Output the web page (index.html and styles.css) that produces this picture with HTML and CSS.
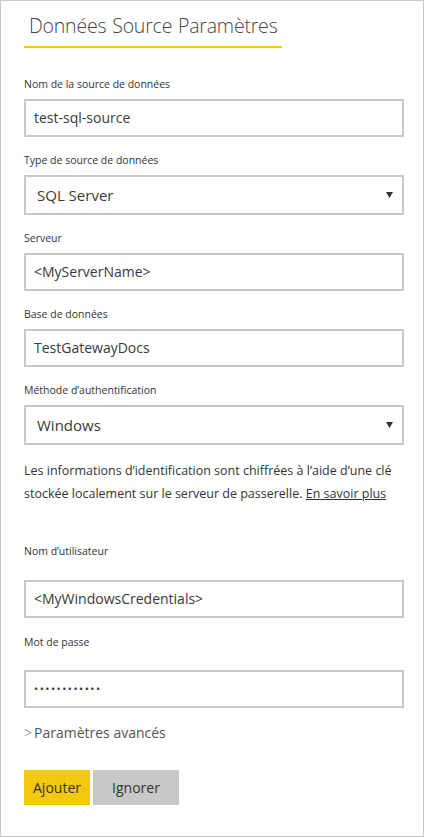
FILE: index.html
```html
<!DOCTYPE html>
<html lang="fr">
<head>
<meta charset="utf-8">
<title>Données Source Paramètres</title>
<link rel="stylesheet" href="styles.css">
</head>
<body>
<div class="frame">
  <h1 class="title">Données Source Paramètres</h1>

  <div class="field first">
    <div class="label">Nom de la source de données</div>
    <div class="input">test-sql-source</div>
  </div>

  <div class="field">
    <div class="label">Type de source de données</div>
    <div class="select"><span class="select-text">SQL Server</span><svg class="caret" width="7" height="6" viewBox="0 0 7 6"><path d="M0 0H7L3.5 6Z" fill="#333"/></svg></div>
  </div>

  <div class="field">
    <div class="label">Serveur</div>
    <div class="input">&lt;MyServerName&gt;</div>
  </div>

  <div class="field">
    <div class="label">Base de données</div>
    <div class="input">TestGatewayDocs</div>
  </div>

  <div class="field">
    <div class="label">Méthode d’authentification</div>
    <div class="select"><span class="select-text">Windows</span><svg class="caret" width="7" height="6" viewBox="0 0 7 6"><path d="M0 0H7L3.5 6Z" fill="#333"/></svg></div>
  </div>

  <p class="info"><span class="line">Les informations d’identification sont chiffrées à l’aide d’une clé</span><span class="line"><span>stockée localement sur le serveur de passerelle.</span> <a class="link" href="#">En savoir plus</a></span></p>

  <div class="field cred user">
    <div class="label">Nom d’utilisateur</div>
    <div class="input">&lt;MyWindowsCredentials&gt;</div>
  </div>

  <div class="field cred pass">
    <div class="label">Mot de passe</div>
    <div class="input dots">••••••••••••</div>
  </div>

  <div class="advanced"><span class="chev">&gt;</span>Paramètres avancés</div>

  <div class="buttons">
    <button class="btn primary">Ajouter</button>
    <button class="btn secondary">Ignorer</button>
  </div>
</div>
</body>
</html>
```

FILE: styles.css
```css
html, body {
  margin: 0;
  padding: 0;
  background: #ffffff;
}

.frame {
  box-sizing: border-box;
  width: 424px;
  height: 837px;
  border: 1px solid #c8c8c8;
  padding: 0 19px 0 23px;
  font-family: "Open Sans", "Noto Sans", "Liberation Sans", sans-serif;
  color: #333333;
}

.title {
  box-sizing: border-box;
  width: 258px;
  margin: 0;
  padding: 11px 0 6px 5px;
  font-size: 19.5px;
  line-height: 28px;
  font-weight: 300;
  color: #444444;
  letter-spacing: -0.2px;
  word-spacing: 1px;
  white-space: nowrap;
  border-bottom: 2px solid #f2c811;
}

.field {
  margin-top: 16px;
}

.field.first {
  margin-top: 29px;
}

.label {
  font-size: 10.5px;
  line-height: 14px;
  height: 14px;
  margin-bottom: 8px;
  color: #333333;
}

.input,
.select {
  box-sizing: border-box;
  width: 380px;
  height: 38px;
  border: 2px solid #c8c8c8;
  padding: 0 8px;
  font-size: 14px;
  line-height: 34px;
  color: #3a3a3a;
  white-space: nowrap;
}

.select {
  height: 40px;
  line-height: 36px;
  display: flex;
  align-items: center;
  justify-content: space-between;
  padding: 0 8px 0 11px;
  font-size: 15px;
}

.select-text {
  line-height: 36px;
}

.caret {
  display: block;
  margin-right: 1px;
}

.info {
  margin: 14px 0 0 0;
  font-size: 12.5px;
  line-height: 23px;
  color: #333333;
}

.line {
  display: block;
  white-space: nowrap;
}

.link {
  color: #333333;
  text-decoration: underline;
}

.field.cred.user {
  margin-top: 39px;
}

.field.cred.user .label {
  margin-bottom: 22px;
}

.field.cred.pass {
  margin-top: 17px;
}

.field.cred.pass .label {
  margin-bottom: 21px;
}

.dots {
  font-size: 11px;
  letter-spacing: 1.5px;
}

.advanced {
  margin-top: 15px;
  font-size: 14px;
  line-height: 20px;
  color: #555555;
}

.chev {
  display: inline-block;
  margin-right: 2px;
  font-weight: 300;
  color: #666666;
}

.buttons {
  display: flex;
  gap: 3px;
  margin-top: 27px;
}

.btn {
  height: 35px;
  border: none;
  margin: 0;
  padding: 0;
  font-family: "Open Sans", "Noto Sans", "Liberation Sans", sans-serif;
  font-size: 14px;
  color: #333333;
  cursor: pointer;
}

.btn.primary {
  width: 66px;
  background: #f2c811;
}

.btn.secondary {
  width: 86px;
  background: #c8c8c8;
}
```
